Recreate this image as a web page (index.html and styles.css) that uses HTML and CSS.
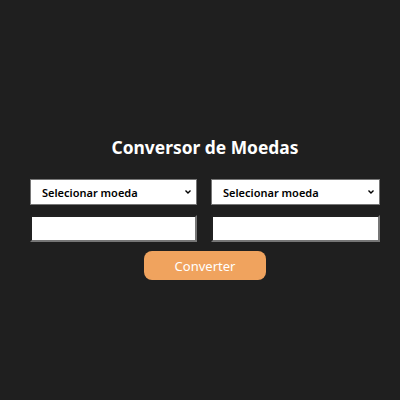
FILE: index.html
```html
<!DOCTYPE html>
<html lang="pt">
<head>
<meta charset="utf-8">
<link rel="stylesheet" href="styles.css">
</head>
<body>
<main class="app">
  <h1 class="title">Conversor de Moedas</h1>
  <div class="grid">
    <select class="field select"><option>Selecionar moeda</option></select>
    <select class="field select"><option>Selecionar moeda</option></select>
    <input class="field input" type="text">
    <input class="field input" type="text">
  </div>
  <button class="btn">Converter</button>
</main>
</body>
</html>
```
FILE: styles.css
```css
html, body {
  margin: 0;
  height: 100%;
  background: #1f1f1f;
}
body {
  font-family: "Noto Sans", "Open Sans", sans-serif;
}
.app {
  box-sizing: border-box;
  padding: 134px 20px 0 30px;
  display: flex;
  flex-direction: column;
  align-items: center;
}
.title {
  margin: 0 0 19px;
  color: #fff;
  font-size: 17.4px;
  font-weight: 700;
  line-height: 26px;
}
.grid {
  width: 350px;
  display: grid;
  grid-template-columns: 167px 169px;
  column-gap: 14px;
  row-gap: 10px;
}
.field {
  box-sizing: border-box;
  margin: 0;
  font-family: "Noto Sans", sans-serif;
}
.select {
  appearance: none;
  -webkit-appearance: none;
  height: 26px;
  padding: 0 16px 0 11px;
  border: 1px solid #767676;
  background: #fff url("data:image/svg+xml,%3Csvg xmlns='http://www.w3.org/2000/svg' width='6' height='4' viewBox='0 0 6 4'%3E%3Cpath d='M0.5 0.5 L3 3 L5.5 0.5' fill='none' stroke='%23000' stroke-width='1.4'/%3E%3C/svg%3E") no-repeat right 5px center;
  color: #000;
  font-size: 11px;
  font-weight: 600;
  border-radius: 0;
}
.input {
  height: 27px;
  border: 2px inset #767676;
  background: #fff;
}
.btn {
  margin-top: 9px;
  width: 122px;
  height: 29px;
  border: none;
  border-radius: 8px;
  background: #f0a35e;
  color: #fff;
  font-family: "Noto Sans", sans-serif;
  font-size: 13px;
  font-weight: 400;
}
```
